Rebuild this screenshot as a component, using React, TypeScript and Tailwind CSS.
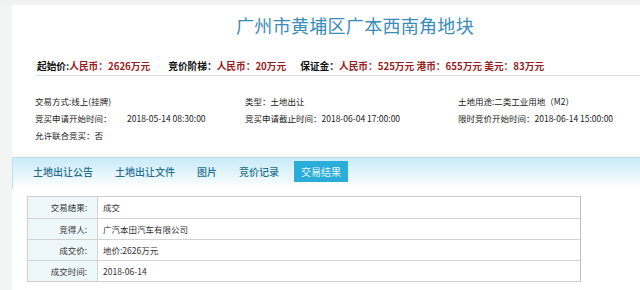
const CJK = "font-['Noto_Sans_CJK_SC',sans-serif]"

const TABS = ['土地出让公告', '土地出让文件', '图片', '竞价记录', '交易结果']

const RESULT_ROWS: [string, string][] = [
  ['交易结果:', '成交'],
  ['竞得人:', '广汽本田汽车有限公司'],
  ['成交价:', '地价:2626万元'],
  ['成交时间:', '2018-06-14'],
]

function Price({ label, value }: { label: string; value: string }) {
  return (
    <span>
      <span className="text-[#111]">{label}</span>
      <span className="text-[#9a1c1c]">{value}</span>
    </span>
  )
}

export default function App() {
  return (
    <div className={`w-[640px] h-[290px] overflow-hidden bg-[#f3f5f5] flex flex-col ${CJK}`}>
      <div className="h-[5px] bg-[#f1f2f2]" />
      <div className="flex-1 flex">
        <div className="w-[12px] bg-[#f3f5f5]" />
        <div className="flex-1 bg-white flex flex-col">
          {/* title */}
          <h1 className="mt-[10px] pl-[58px] text-center text-[18px] leading-[20px] text-[#3a8cb9] tracking-[0.3px]">
            广州市黄埔区广本西南角地块
          </h1>

          {/* price line */}
          <div className="mt-[25px] ml-[23px] pl-[2px] pb-[3px] border-b border-[#dde4e7] text-[9.7px] leading-[12px] font-bold flex">
            <Price label="起始价:" value="人民币：2626万元" />
            <span className="w-[18px]" />
            <Price label="竞价阶梯：" value="人民币：20万元" />
            <span className="w-[14px]" />
            <span>
              <span className="text-[#111]">保证金：</span>
              <span className="text-[#9a1c1c]">人民币：525万元 港币：655万元 美元：83万元</span>
            </span>
          </div>

          {/* info grid */}
          <div className="pt-[17px] pl-[23px] grid grid-cols-[210px_213px_1fr] text-[8.5px] leading-[17px] text-[#222]">
            <div>交易方式:线上(挂牌)</div>
            <div>类型：土地出让</div>
            <div>土地用途:二类工业用地（M2）</div>
            <div>
              <span className="inline-block w-[92px]">竞买申请开始时间：</span>2018-05-14 08:30:00
            </div>
            <div>竞买申请截止时间：2018-06-04 17:00:00</div>
            <div>限时竞价开始时间：2018-06-14 15:00:00</div>
            <div>允许联合竞买：否</div>
          </div>

          <div className="mt-[8px] h-[5px] bg-gradient-to-b from-white to-[#fbf5f3]" />

          {/* tab bar */}
          <div className="h-[32px] border-t border-l border-[#b9e2ef] bg-gradient-to-b from-[#c8ebf8] to-white pt-[3px] pl-[13px] flex gap-[8px] items-start">
            {TABS.map((t, i) => (
              <div
                key={t}
                className={
                  i === TABS.length - 1
                    ? 'px-[7px] text-[10px] leading-[21px] bg-[#2badd9] text-[#eaf8fd]'
                    : 'px-[7px] text-[10px] leading-[21px] text-[#236e90] font-medium'
                }
              >
                {t}
              </div>
            ))}
          </div>

          {/* result table */}
          <div className="mt-[7px] ml-[15px] w-[554px] border border-[#cfcfcf] border-r-[#bdbdbd] text-[8.5px] text-[#333]">
            {RESULT_ROWS.map(([k, v], i) => (
              <div key={k} className={`flex h-[21px] ${i > 0 ? 'border-t border-[#d3d3d3]' : ''}`}>
                <div className="w-[70px] bg-[#eef8fb] border-r border-[#d3d3d3] text-right pr-[10px] leading-[21px]">
                  {k}
                </div>
                <div className="pl-[5px] leading-[21px]">{v}</div>
              </div>
            ))}
          </div>
        </div>
      </div>
    </div>
  )
}
